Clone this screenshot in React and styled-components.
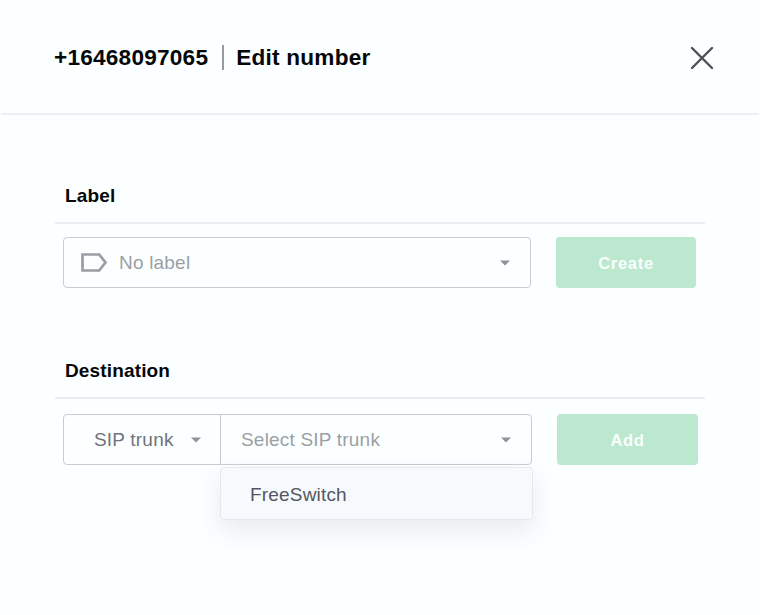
import React from "react";
import styled, { createGlobalStyle } from "styled-components";

const GlobalStyle = createGlobalStyle`
  * { box-sizing: border-box; }
  body {
    margin: 0;
    background: #fcffff;
    font-family: "Liberation Sans", Arial, sans-serif;
  }
`;

const Dialog = styled.main`
  width: 760px;
  height: 615px;
  overflow: hidden;
  background: #fcffff;
`;

const Header = styled.header`
  display: flex;
  align-items: center;
  justify-content: space-between;
  height: 111px;
  margin: 4px 1px 0;
  padding: 0 45px 2px 53px;
  background: #fbffff;
  border-bottom: 2px solid #ebeff2;
`;

const Title = styled.h1`
  display: flex;
  align-items: center;
  margin: 0;
  color: #050708;
  font-size: 22.6px;
  line-height: 28px;
  letter-spacing: 0.23px;
  font-weight: 700;
`;

const Divider = styled.span`
  width: 2px;
  height: 25px;
  margin: 0 12px 0 14px;
  background: #999ba3;
`;

const CloseButton = styled.button`
  display: flex;
  padding: 0;
  border: 0;
  background: none;
  color: #4d4f58;
`;

const Section = styled.section`
  width: 650px;
  margin: ${(p) => p.$top}px 0 0 55px;
`;

const SectionTitle = styled.h2`
  height: 40px;
  margin: 0;
  padding-left: 10px;
  border-bottom: 2px solid #e9ecf0;
  color: #050708;
  font-size: 19px;
  line-height: 24px;
  letter-spacing: 0.15px;
  font-weight: 700;
`;

const Row = styled.div`
  display: flex;
  align-items: flex-end;
  padding-left: 8px;
  margin-top: ${(p) => p.$top}px;
  gap: ${(p) => p.$gap}px;
`;

const SelectGroup = styled.div`
  position: relative;
  display: flex;
  width: ${(p) => p.$width}px;
  height: 51px;
  border: 1px solid #c8cdd1;
  border-radius: 4px;
`;

const Select = styled.div`
  display: flex;
  align-items: center;
  flex: ${(p) => (p.$width ? `0 0 ${p.$width}px` : 1)};
  padding: 0 ${(p) => p.$right}px 0 ${(p) => p.$left}px;
  color: ${(p) => (p.$filled ? "#70747e" : "#9b9fa5")};
  font-size: 19px;
  line-height: 25px;
  letter-spacing: 0.2px;

  & + & { border-left: 1px solid #c5cacf; }
`;

const SelectText = styled.span`
  flex: 1;
  white-space: nowrap;
`;

const LabelSvg = styled.svg`
  margin-right: 12px;
`;

const Button = styled.button`
  width: ${(p) => p.$width}px;
  height: 51px;
  padding: 0;
  border: 0;
  border-radius: 4px;
  background: #bce8d0;
  color: #f9fffc;
  font: 700 16.5px/20px "Liberation Sans", Arial, sans-serif;
  letter-spacing: 0.7px;
`;

const Menu = styled.div`
  position: absolute;
  top: 52px;
  left: 156px;
  width: 313px;
  height: 53px;
  padding: 14px 29px;
  border: 1px solid #e5e8ef;
  border-radius: 4px;
  background: #f7fafd;
  box-shadow: 0 10px 24px rgba(60, 75, 110, 0.11);
  color: #535661;
  font-size: 19px;
  line-height: 25px;
  letter-spacing: 0.18px;
`;

const Caret = () => (
  <svg width="10" height="6" viewBox="0 0 10 6" aria-hidden="true">
    <path d="M0 .5h10L5 5.5z" fill="#8e9299" />
  </svg>
);

const LabelIcon = () => (
  <LabelSvg width="26" height="19" viewBox="0 0 26 19" aria-hidden="true">
    <path d="M1.5 1.5h16.7l6.3 8-6.3 8H1.5z" fill="none" stroke="#999da3" strokeWidth="2.7" />
  </LabelSvg>
);

export default function App() {
  return (
    <Dialog>
      <GlobalStyle />
      <Header>
        <Title>
          +16468097065
          <Divider />
          Edit number
        </Title>
        <CloseButton aria-label="Close">
          <svg width="24" height="24" viewBox="0 0 24 24">
            <path d="M2 2l20 20M22 2L2 22" stroke="currentColor" strokeWidth="2.4" strokeLinecap="round" />
          </svg>
        </CloseButton>
      </Header>
      <Section $top={69}>
        <SectionTitle>Label</SectionTitle>
        <Row $top={13} $gap={25}>
          <SelectGroup $width={468}>
            <Select $left={17} $right={20}>
              <LabelIcon />
              <SelectText>No label</SelectText>
              <Caret />
            </Select>
          </SelectGroup>
          <Button $width={140}>Create</Button>
        </Row>
      </Section>
      <Section $top={71}>
        <SectionTitle>Destination</SectionTitle>
        <Row $top={15} $gap={25}>
          <SelectGroup $width={469}>
            <Select $filled $width={156} $left={30} $right={19}>
              <SelectText>SIP trunk</SelectText>
              <Caret />
            </Select>
            <Select $left={20} $right={20}>
              <SelectText>Select SIP trunk</SelectText>
              <Caret />
            </Select>
            <Menu>FreeSwitch</Menu>
          </SelectGroup>
          <Button $width={141}>Add</Button>
        </Row>
      </Section>
    </Dialog>
  );
}
